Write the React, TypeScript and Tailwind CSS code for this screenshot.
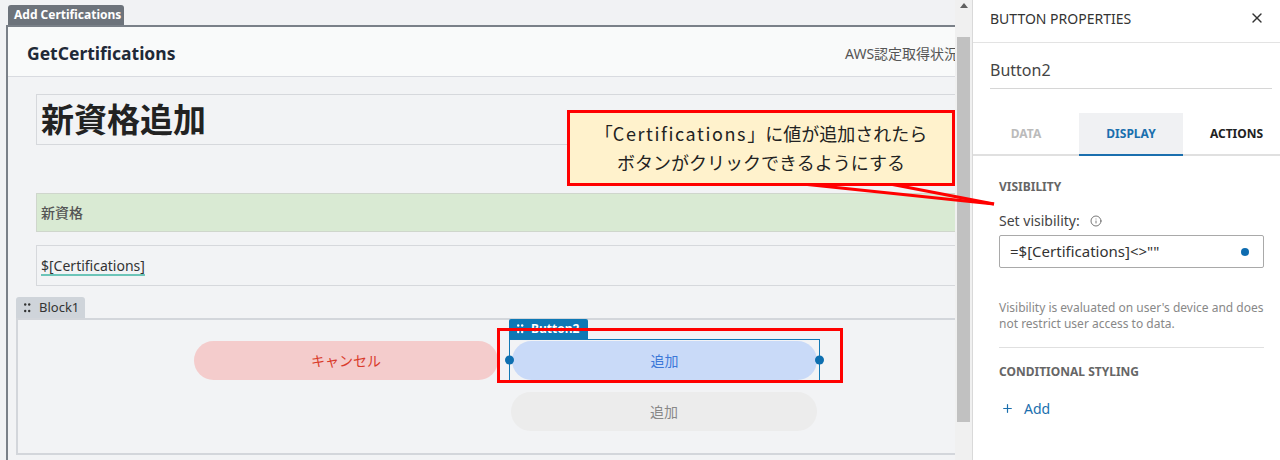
import { X, Plus, Info } from "lucide-react";

const ui = "font-['Noto_Sans','Noto_Sans_CJK_JP',sans-serif]";

function DragDots({ className }: { className: string }) {
  return (
    <svg width="7" height="10" viewBox="0 0 7 10" className={className}>
      <circle cx="1.2" cy="1.5" r="1.2" />
      <circle cx="5.2" cy="1.5" r="1.2" />
      <circle cx="1.2" cy="8" r="1.2" />
      <circle cx="5.2" cy="8" r="1.2" />
    </svg>
  );
}

function Canvas() {
  return (
    <div className="relative h-[460px] w-[955px] shrink-0 overflow-hidden bg-[#f1f2f4] pt-[5px]">
      <div className="ml-[8px] flex h-[20px] w-[116px] items-center rounded-t-[3px] bg-[#6d737b] pl-[6px] text-[12px] font-bold text-white">
        Add Certifications
      </div>
      <div className="ml-[6px] w-[1000px] border-l-2 border-t-2 border-[#7a8088]">
        <div className="flex h-[50px] items-center border-b border-[#d9dbe0] bg-[#f9fafa] pt-[3px]">
          <span className="w-[837px] shrink-0 pl-[19px] text-[17.5px] font-bold text-[#1f2937]">
            GetCertifications
          </span>
          <span className="whitespace-nowrap text-[14px] text-[#555]">AWS認定取得状況</span>
        </div>
        <div className="bg-[#f2f3f5] pt-[17px] pb-[5px]">
          <div className="ml-[28px] flex h-[51px] items-center border border-[#d6d8dc] pl-[4px] text-[33px] font-bold text-[#222]">
            新資格追加
          </div>
          <div className="ml-[28px] mt-[48px] flex h-[39px] items-center border border-[#cfd6cc] bg-[#d9ead3] pl-[4px] text-[14px] font-medium text-[#555]">
            新資格
          </div>
          <div className="ml-[28px] mt-[13px] flex h-[41px] items-center border border-[#d6d8dc] pl-[4px] text-[14px] text-[#333]">
            <span className="underline decoration-[#6cc4b8] decoration-2 underline-offset-[3px]">
              $[Certifications]
            </span>
          </div>
          <div className="ml-[8px] mt-[11px]">
            <div className="flex h-[21px] w-[69px] items-center gap-[8px] rounded-t-[3px] bg-[#cfd4da] pl-[8px] text-[13px] text-[#333]">
              <DragDots className="fill-[#333]" />
              Block1
            </div>
            <div className="h-[137px] border-2 border-[#d3d6db] pl-[176px] pt-[19px]">
              <div className="grid grid-cols-[304px_311px] gap-x-[11px]">
                <div className="flex h-[39px] items-center justify-center self-center rounded-full bg-[#f4cccc] text-[14px] text-[#d93b2b]">
                  キャンセル
                </div>
                <div className="relative border border-[#1279b6] px-[2px] pt-[1px]">
                  <div className="absolute -left-px -top-[21px] flex h-[20px] w-[79px] items-center gap-[7px] rounded-t-[2px] bg-[#0e78b5] pl-[8px] text-[12px] font-bold text-white">
                    <DragDots className="fill-white" />
                    Button2
                  </div>
                  <span className="absolute -left-[5px] top-1/2 h-[9px] w-[9px] -translate-y-1/2 rounded-full bg-[#0e6fb0]" />
                  <span className="absolute -right-[5px] top-1/2 h-[9px] w-[9px] -translate-y-1/2 rounded-full bg-[#0e6fb0]" />
                  <div className="flex h-[39px] items-center justify-center rounded-full bg-[#c9daf8] text-[14px] text-[#3c78d8]">
                    追加
                  </div>
                </div>
                <div className="col-start-2 ml-[2px] mt-[11px] flex h-[39px] w-[306px] items-center justify-center rounded-full bg-[#ececec] text-[14px] text-[#888]">
                  追加
                </div>
              </div>
            </div>
          </div>
        </div>
      </div>
    </div>
  );
}

function Scrollbar() {
  return (
    <div className="relative h-[460px] w-[17px] shrink-0 bg-[#f0f0f0] px-[2px]">
      <div className="flex h-[37px] justify-center pt-[3px]">
        <div className="h-0 w-0 border-x-[4px] border-b-[5px] border-x-transparent border-b-[#606060]" />
      </div>
      <div className="h-[385px] bg-[#c1c1c1]" />
    </div>
  );
}

function Panel() {
  return (
    <div className="h-[460px] flex-1 border-l border-[#d9d9d9] bg-white">
      <div className="flex h-[43px] items-start justify-between border-b border-[#e3e3e3] pl-[17px] pr-[15px] pt-[8px]">
        <span className="text-[14px] text-[#333]">BUTTON PROPERTIES</span>
        <X className="mt-[2px] h-[16px] w-[16px] text-[#333]" strokeWidth={2} />
      </div>
      <div className="ml-[17px] mr-[8px] mt-[15px] border-b border-[#d6d6d6] pb-[6px] text-[16px] text-[#444]">
        Button2
      </div>
      <div className="mt-[24px] flex h-[43px] border-b-2 border-[#e0e0e0] text-[12px] font-bold">
        <div className="flex w-[106px] items-center justify-center text-[#bbb]">DATA</div>
        <div className="-mb-[2px] flex w-[104px] items-center justify-center border-b-2 border-[#1a6fae] bg-[#f0f1f3] text-[#1a6fae]">
          DISPLAY
        </div>
        <div className="flex flex-1 items-center justify-center pl-[10px] text-[#222]">ACTIONS</div>
      </div>
      <div className="px-[26px] pr-[16px]">
        <div className="mt-[22px] text-[12px] font-bold text-[#666]">VISIBILITY</div>
        <div className="mt-[14px] flex items-center gap-[10px] text-[14px] text-[#444]">
          Set visibility:
          <Info className="h-[12px] w-[12px] text-[#555]" strokeWidth={1.6} />
        </div>
        <div className="mt-[4px] flex h-[33px] items-center justify-between rounded-[2px] border border-[#a9a9a9] pl-[10px] pr-[14px] text-[15px] text-[#333]">
          {'=$[Certifications]<>""'}
          <span className="h-[8px] w-[8px] rounded-full bg-[#0e6cb0]" />
        </div>
        <div className="mt-[32px] text-[12px] leading-[16px] text-[#888]">
          Visibility is evaluated on user's device and does not restrict user access to data.
        </div>
        <div className="mt-[15px] border-t border-[#e0e0e0]" />
        <div className="mt-[15px] text-[12px] font-bold text-[#666]">CONDITIONAL STYLING</div>
        <div className="mt-[17px] flex items-center gap-[10px] pl-[2px] text-[14px] text-[#1a6fae]">
          <Plus className="h-[13px] w-[13px]" strokeWidth={2.2} />
          Add
        </div>
      </div>
    </div>
  );
}

export default function App() {
  return (
    <div className={`relative flex h-[460px] w-[1280px] overflow-hidden ${ui}`}>
      <Canvas />
      <Scrollbar />
      <Panel />

      <div className="absolute left-[497px] top-[328px] h-[55px] w-[346px] border-[3px] border-[#ff0000]" />

      <svg className="pointer-events-none absolute left-0 top-0" width="1280" height="460">
        <line x1="793" y1="183" x2="994" y2="204" stroke="#ff0000" strokeWidth="3" />
        <line x1="890" y1="184" x2="994" y2="204" stroke="#ff0000" strokeWidth="3" />
      </svg>

      <div className="absolute left-[567px] top-[110px] flex h-[76px] w-[388px] flex-col items-center justify-center border-[3px] border-[#ff0000] bg-[#fff2cc] font-['Noto_Sans_CJK_JP',sans-serif] text-[18px] leading-[29px] text-[#222]">
        <span>
          「<span className="tracking-[1.6px]">Certifications</span>」に値が追加されたら
        </span>
        <span>ボタンがクリックできるようにする</span>
      </div>
    </div>
  );
}
